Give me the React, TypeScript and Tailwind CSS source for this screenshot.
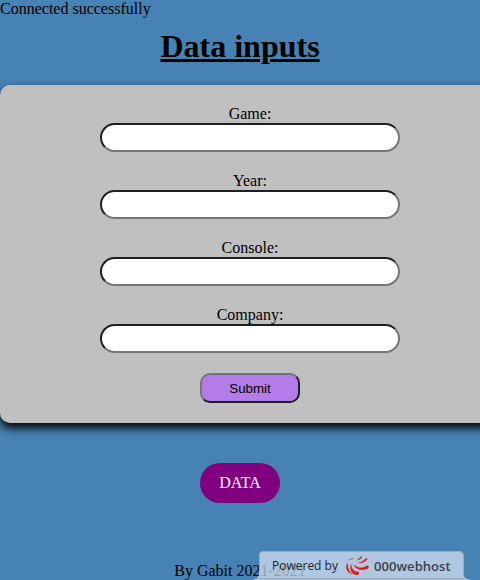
const fields = ['Game:', 'Year:', 'Console:', 'Company:'];

function HostBadge() {
  return (
    <div className="absolute right-1 bottom-0 h-[31px] w-[226px]">
      <svg className="absolute inset-0" width="226" height="31" viewBox="0 0 226 31" fill="none">
        <path
          d="M2 31C7 30 9 28 9 24V7Q9 2 14 2H208.500Q213.500 2 213.500 7V24C213.500 28 215 30 221 31Z"
          fill="#dce4f3"
          fillOpacity="0.7"
        />
        <path d="M9.500 24V7Q9.500 2.500 14 2.500H208.500Q213.500 2.500 213.500 7V24" stroke="#8eafce" />
        <path d="M5 29.500H217" stroke="#98aabd" />
      </svg>
      <div className="relative flex h-full items-center pt-[3px] pl-[22px] font-['Open_Sans',sans-serif] whitespace-nowrap">
        <span className="w-[73px] text-[12px] leading-[18px] text-[#20262d]">Powered by</span>
        <svg width="26" height="22" viewBox="0 0 26 22" fill="#d8201c">
          <path d="M2.800 7.500C-0.400 12 1.200 17.500 8 19.900C4.300 17 2.400 13 2.800 7.500Z" />
          <path d="M6.100 8.500C4 13.500 6.300 20 12 20.200C14.500 20 15 17.400 13 16.600C9.500 17.500 6.300 13.500 6.100 8.500Z" />
          <path d="M9 9.200C9.500 14 15.500 16 21.500 14.200C24.500 13 24.300 10.400 21.800 10.500C18.500 13.300 12.300 13.500 9 9.200Z" />
          <path d="M13 7.300C15.500 8.700 19.500 8 22.400 4.300C22.400 2.900 21.200 2.900 20.300 3.700C18.500 6 16 7.300 13 7.300Z" />
          <path d="M10.500 5.300C13.500 5.400 16 4.300 17 2.300C16.900 1 15.800 1.200 15.200 2C14.300 3.500 12.800 4.600 10.500 5.300Z" />
          <path d="M3.500 5.400C5 3.600 7.500 2.900 10.200 3.200C8 3.700 5.700 4.600 3.500 5.400Z" />
        </svg>
        <span className="ml-[3px] text-[13px] leading-[18px] font-semibold tracking-[0.05px] text-[#3a424c]">000webhost</span>
      </div>
    </div>
  );
}

export default function App() {
  return (
    <div className="relative flex h-[580px] w-[480px] flex-col overflow-hidden bg-[#4682b4] font-['Liberation_Serif',serif] text-base leading-[18px] text-black">
      <p>Connected successfully</p>
      <h1 className="mt-2.5 text-center text-[32px] leading-9 font-bold underline decoration-[3px] underline-offset-2">
        Data inputs
      </h1>
      <form
        className="mt-[21px] flex h-[338px] w-[500px] shrink-0 flex-col items-center gap-5 rounded-[10px] bg-[#c0c0c0] pt-5 shadow-[0_5px_10px_#000]"
        onSubmit={(e) => e.preventDefault()}
      >
        {fields.map((label) => (
          <label key={label} className="flex flex-col items-center">
            {label}
            <input
              type="text"
              className="block h-[29px] w-[300px] rounded-[15px] border-2 border-t-[#1f1f1f] border-r-[#767676] border-b-[#767676] border-l-[#1f1f1f] bg-white px-2"
            />
          </label>
        ))}
        <button
          type="submit"
          className="h-[30px] w-[100px] rounded-[10px] border-2 border-t-[#767676] border-r-[#1f1f1f] border-b-[#1f1f1f] border-l-[#767676] bg-[#b57be8] pt-0.5 font-['Liberation_Sans',sans-serif] text-[13.333px]"
        >
          Submit
        </button>
      </form>
      <a className="mx-auto mt-10 flex h-10 w-20 items-center justify-center rounded-[20px] bg-[#800080] text-white">
        DATA
      </a>
      <footer className="mt-[59px] text-center">By Gabit 2021-2021</footer>
      <HostBadge />
    </div>
  );
}
